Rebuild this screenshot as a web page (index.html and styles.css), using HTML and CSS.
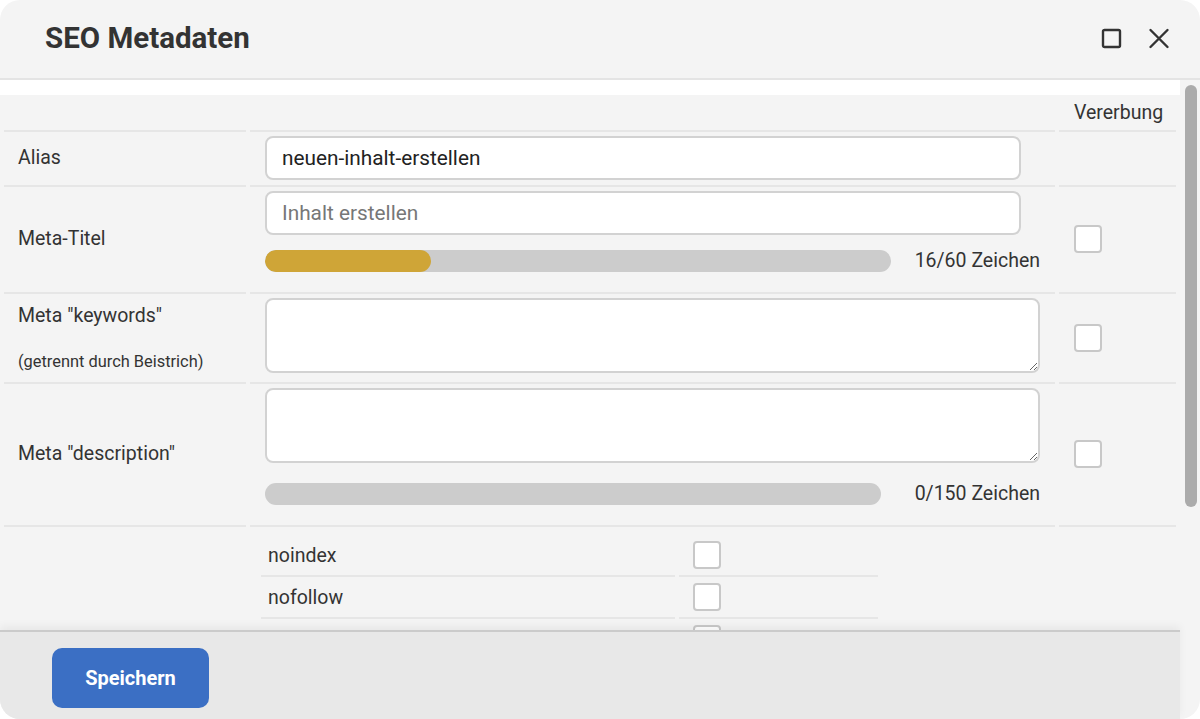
FILE: index.html
```html
<!DOCTYPE html>
<html lang="de">
<head>
  <meta charset="UTF-8" />
  <meta name="viewport" content="width=device-width, initial-scale=1.0" />
  <title>SEO Metadaten</title>
  <link rel="stylesheet" href="styles.css">
</head>
<body>
  <div class="dialog">
    <header class="dialog-header">
      <h1>SEO Metadaten</h1>
      <div class="window-tools">
        <button class="tool" aria-label="Maximieren">
          <svg width="21" height="21" viewBox="0 0 21 21"><rect x="2" y="2" width="17" height="17" rx="1.5" /></svg>
        </button>
        <button class="tool" aria-label="Schließen">
          <svg width="22" height="21" viewBox="0 0 22 21"><path d="M2.5 2 L19.5 19 M19.5 2 L2.5 19" /></svg>
        </button>
      </div>
    </header>

    <div class="dialog-main">
      <div class="content-col">
        <div class="scroll-area">
          <div class="top-gap"></div>

          <table class="seo-table">
            <colgroup>
              <col class="col-label" />
              <col class="col-field" />
              <col class="col-inherit" />
            </colgroup>
            <thead>
              <tr><th></th><th></th><th>Vererbung</th></tr>
            </thead>
            <tbody>
              <tr>
                <td class="label">Alias</td>
                <td class="field"><input class="text-input" type="text" value="neuen-inhalt-erstellen" /></td>
                <td class="inherit"></td>
              </tr>
              <tr>
                <td class="label">Meta-Titel</td>
                <td class="field">
                  <input class="text-input" type="text" placeholder="Inhalt erstellen" />
                  <div class="counter">
                    <div class="bar"><div class="bar-fill" style="width: 26.6%"></div></div>
                    <span class="counter-label">16/60 Zeichen</span>
                  </div>
                </td>
                <td class="inherit"><input class="check" type="checkbox" /></td>
              </tr>
              <tr>
                <td class="label label--hint">Meta "keywords"<br /><br /><small>(getrennt durch Beistrich)</small></td>
                <td class="field"><textarea class="text-area"></textarea></td>
                <td class="inherit"><input class="check" type="checkbox" /></td>
              </tr>
              <tr>
                <td class="label">Meta "description"</td>
                <td class="field">
                  <textarea class="text-area"></textarea>
                  <div class="counter counter--long">
                    <div class="bar"><div class="bar-fill" style="width: 0%"></div></div>
                    <span class="counter-label">0/150 Zeichen</span>
                  </div>
                </td>
                <td class="inherit"><input class="check" type="checkbox" /></td>
              </tr>
              <tr>
                <td class="label"></td>
                <td class="field robots">
                  <table class="robots-table">
                    <tr><td>noindex</td><td><input class="check" type="checkbox" /></td></tr>
                    <tr><td>nofollow</td><td><input class="check" type="checkbox" /></td></tr>
                    <tr><td>noarchive</td><td><input class="check" type="checkbox" /></td></tr>
                    <tr><td>nosnippet</td><td><input class="check" type="checkbox" /></td></tr>
                    <tr><td>noimageindex</td><td><input class="check" type="checkbox" /></td></tr>
                    <tr><td>notranslate</td><td><input class="check" type="checkbox" /></td></tr>
                  </table>
                </td>
                <td class="inherit"></td>
              </tr>
            </tbody>
          </table>
        </div>

        <footer class="dialog-footer">
          <button class="btn-save">Speichern</button>
        </footer>
      </div>

      <!-- scroll rail for the form area -->
      <div class="scroll-rail">
        <div class="scroll-thumb"></div>
      </div>
    </div>
  </div>
</body>
</html>
```

FILE: styles.css
```css
* {
  box-sizing: border-box;
  margin: 0;
  padding: 0;
}
body {
  font-family: Roboto, "Liberation Sans", sans-serif;
  background: #ffffff;
  color: #333333;
  font-size: 19.5px;
}
.dialog {
  width: 1200px;
  height: 719px;
  background: #f4f4f4;
  border-radius: 20px;
  overflow: hidden;
  display: flex;
  flex-direction: column;
}
.dialog-header {
  flex: 0 0 80px;
  display: flex;
  align-items: center;
  justify-content: space-between;
  padding: 0 30px 2px 45px;
  border-bottom: 2px solid #e4e4e4;
}
.dialog-header h1 {
  font-size: 29.5px;
  font-weight: 700;
  color: #333;
}
.window-tools {
  display: flex;
  gap: 26px;
  align-items: center;
}
.tool {
  background: none;
  border: none;
  display: flex;
  cursor: pointer;
}
.tool svg {
  fill: none;
  stroke: #333;
  stroke-width: 2.4;
  stroke-linecap: round;
}
.dialog-main {
  flex: 1;
  min-height: 0;
  display: flex;
}
.content-col {
  width: 1180px;
  display: flex;
  flex-direction: column;
}
.scroll-area {
  flex: 1;
  min-height: 0;
  overflow: hidden;
}
.scroll-rail {
  width: 20px;
  padding: 5px 3px 0 5px;
}
.scroll-thumb {
  width: 12px;
  height: 422px;
  background: #ababab;
  border-radius: 6px;
}
.top-gap {
  height: 15px;
  background: #ffffff;
}
.seo-table {
  width: 1180px;
  table-layout: fixed;
  border-collapse: separate;
  border-spacing: 4px 0;
}
.col-label { width: 242px; }
.col-field { width: 805px; }
.col-inherit { width: 117px; }
.seo-table th {
  height: 35px;
  font-weight: 400;
  text-align: left;
  padding: 0 15px;
  vertical-align: middle;
}
.seo-table > tbody > tr > td {
  border-top: 2px solid #e6e6e6;
  vertical-align: middle;
}
.label {
  padding: 4px 14px 5px;
  line-height: 22.5px;
}
.label--hint {
  padding-top: 8px;
}
.label small {
  font-size: 16.4px;
}
.field {
  padding: 4px 15px 5px;
}
.inherit {
  padding: 4px 15px 5px;
}
.text-input {
  display: block;
  width: calc(100% - 19px);
  height: 44px;
  border: 2px solid #d2d2d2;
  border-radius: 8px;
  background: #ffffff;
  padding: 0 15px;
  font-family: inherit;
  font-size: 20.8px;
  color: #222;
}
.text-input::placeholder {
  color: #777;
}
.text-area {
  display: block;
  width: 100%;
  height: 75px;
  border: 2px solid #d2d2d2;
  border-radius: 8px;
  background: #ffffff;
  margin-bottom: 4px;
  font-family: inherit;
  font-size: 20.8px;
}
.counter {
  display: flex;
  align-items: center;
  margin: 15px 0;
}
.text-area + .counter {
  margin-top: 20px;
}
.bar {
  flex: 1;
  height: 22px;
  background: #cccccc;
  border-radius: 11px;
  overflow: hidden;
}
.bar-fill {
  height: 100%;
  background: #cfa537;
  border-radius: 11px;
}
.counter-label {
  margin-left: 24px;
  line-height: 22px;
  white-space: nowrap;
}
.counter--long .counter-label {
  margin-left: 34px;
}
.check {
  appearance: none;
  -webkit-appearance: none;
  display: block;
  width: 28px;
  height: 28px;
  background: #ffffff;
  border: 2px solid #c8c8c8;
  border-radius: 4px;
}
.field.robots {
  padding: 8px 0 5px 7px;
  vertical-align: top;
}
.robots-table {
  border-collapse: separate;
  border-spacing: 4px 0;
}
.robots-table td {
  border-bottom: 2px solid #e6e6e6;
  padding: 6px 0 6px 7px;
  vertical-align: middle;
  height: 40px;
}
.robots-table td:first-child {
  width: 414px;
}
.robots-table td:last-child {
  width: 199px;
  padding-left: 14px;
}
.dialog-footer {
  position: relative;
  flex: 0 0 89px;
  background: #e8e8e8;
  border-top: 2px solid #cbcbcb;
  box-shadow: 0 -4px 8px rgba(0, 0, 0, 0.05);
  padding: 16px 52px 0;
}
.btn-save {
  width: 157px;
  height: 60px;
  background: #3b6fc4;
  color: #ffffff;
  border: none;
  border-radius: 10px;
  font-family: inherit;
  font-size: 20px;
  font-weight: 700;
  cursor: pointer;
}
```
